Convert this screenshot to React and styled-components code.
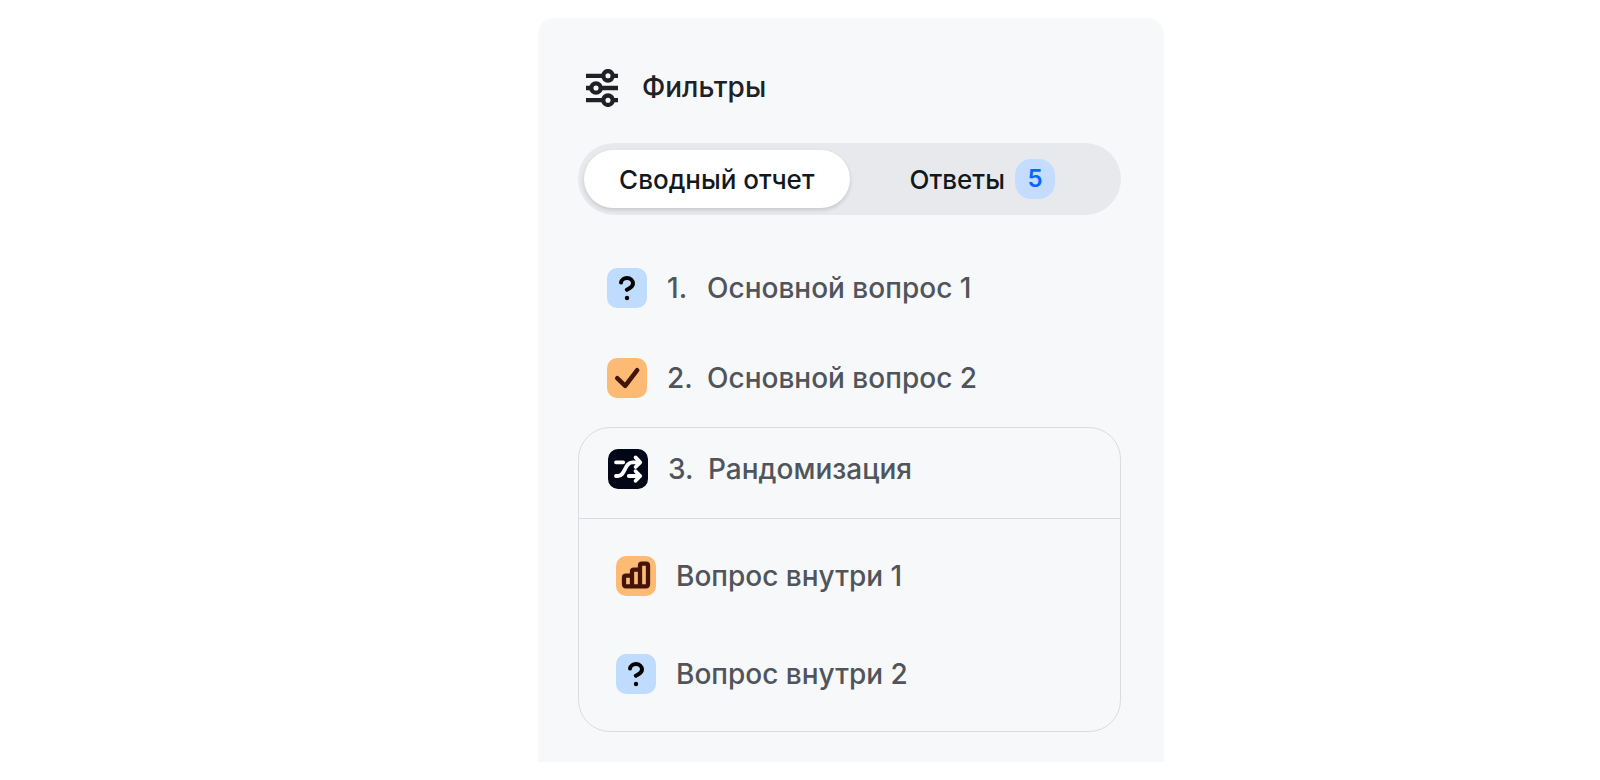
import React, { useState } from "react";
import styled, { createGlobalStyle } from "styled-components";

const questions = [
  { id: 1, type: "question", title: "Основной вопрос 1" },
  { id: 2, type: "check", title: "Основной вопрос 2" },
];

const group = {
  id: 3,
  type: "shuffle",
  title: "Рандомизация",
  children: [
    { id: 31, type: "bars", title: "Вопрос внутри 1" },
    { id: 32, type: "question", title: "Вопрос внутри 2" },
  ],
};

const iconColors = {
  question: { background: "#bfdbfe", color: "#000000" },
  check: { background: "#fdba74", color: "#431407" },
  bars: { background: "#fdba74", color: "#431407" },
  shuffle: { background: "#020617", color: "#ffffff" },
};

const iconShapes = {
  question: (
    <>
      <path
        d="M14 14.6C14.4 11.8 16.9 10 20 10C23.4 10 26 12.4 26 15.6C26 19.6 21.4 20.4 19.8 21.8"
        strokeWidth="4"
      />
      <circle cx="20" cy="30" r="2.2" fill="currentColor" stroke="none" />
    </>
  ),
  check: <path d="M10.2 20.2L18.2 27.8L30.2 12.2" strokeWidth="4.5" />,
  bars: (
    <path
      d="M16 30.3V19.7H10Q8 19.7 8 21.7V28.3Q8 30.3 10 30.3H30Q32 30.3 32 28.3V9.7Q32 7.7 30 7.7H26Q24 7.7 24 9.7V30.3M16 19.7V15.7Q16 13.7 18 13.7H24"
      strokeWidth="4.3"
    />
  ),
  shuffle: (
    <path
      d="M8 13.3H15.2M8 27H10C17.4 27 16.4 13.3 24.4 13.3H31.6M27.6 8.4L32.2 13.3L27.6 18M20.8 27H31.6M27.6 22.2L32.2 27L27.6 31.8"
      strokeWidth="3.8"
    />
  ),
};

const TypeIcon = ({ type }) => (
  <IconBox $colors={iconColors[type]}>
    <svg viewBox="0 0 40 40" aria-hidden="true">
      {iconShapes[type]}
    </svg>
  </IconBox>
);

const FilterIcon = () => (
  <svg width="32" height="38" viewBox="0 0 32 38" fill="none" aria-hidden="true">
    <g stroke="currentColor" strokeWidth="4.3">
      <path d="M0 6.8H17M27 6.8H32M0 19H5M15 19H32M0 31.2H17M27 31.2H32" />
      <circle cx="22" cy="6.8" r="4.7" />
      <circle cx="10" cy="19" r="4.7" />
      <circle cx="22" cy="31.2" r="4.7" />
    </g>
  </svg>
);

const App = () => {
  const [activeTab, setActiveTab] = useState("report");

  return (
    <Page>
      <GlobalStyle />
      <Panel>
        <Header>
          <FilterIcon />
          <Title>Фильтры</Title>
        </Header>

        <Tabs role="tablist">
          <Tab
            role="tab"
            aria-selected={activeTab === "report"}
            $active={activeTab === "report"}
            onClick={() => setActiveTab("report")}
          >
            Сводный отчет
          </Tab>
          <Tab
            role="tab"
            aria-selected={activeTab === "answers"}
            $active={activeTab === "answers"}
            onClick={() => setActiveTab("answers")}
          >
            Ответы
            <Badge>5</Badge>
          </Tab>
        </Tabs>

        <List>
          {questions.map(({ id, type, title }) => (
            <li key={id}>
              <Row>
                <TypeIcon type={type} />
                <Label>
                  <Number>{id}.</Number>
                  {title}
                </Label>
              </Row>
            </li>
          ))}
          <Group>
            <GroupHeader>
              <TypeIcon type={group.type} />
              <Label>
                <Number>{group.id}.</Number>
                {group.title}
              </Label>
            </GroupHeader>
            <NestedList>
              {group.children.map(({ id, type, title }) => (
                <li key={id}>
                  <NestedRow>
                    <TypeIcon type={type} />
                    <Label>{title}</Label>
                  </NestedRow>
                </li>
              ))}
            </NestedList>
          </Group>
        </List>
      </Panel>
    </Page>
  );
};

const GlobalStyle = createGlobalStyle`
  * {
    box-sizing: border-box;
  }

  body {
    margin: 0;
    background: #fff;
    font-family: Inter, "Liberation Sans", sans-serif;
  }

  button {
    border: none;
    background: none;
    font: inherit;
    cursor: pointer;
  }
`;

const Page = styled.main`
  display: grid;
  grid-template-columns: 538fr minmax(0, 626px) 436fr;
  padding: 18px 0;
`;

const Panel = styled.aside`
  grid-column: 2;
  padding: 51px 43px 30px 40px;
  border-radius: 16px 16px 0 0;
  background: #f7f8fa;
`;

const Header = styled.header`
  display: flex;
  gap: 24px;
  margin-bottom: 36px;
  padding-left: 8px;
  color: #202124;
`;

const Title = styled.h2`
  margin: 0;
  font-size: 28px;
  font-weight: 500;
  line-height: 36px;
`;

const Tabs = styled.div`
  display: flex;
  padding: 7px 6px;
  border-radius: 36px;
  background: #e8e9ed;
`;

const Tab = styled.button`
  display: flex;
  flex: 1;
  align-items: center;
  justify-content: center;
  gap: 10px;
  height: 58px;
  padding: 0;
  border-radius: 29px;
  background: ${({ $active }) => ($active ? "#fff" : "transparent")};
  box-shadow: ${({ $active }) =>
    $active ? "0 2px 4px rgba(0, 0, 0, 0.15)" : "none"};
  color: #12191d;
  font-size: 26px;
  font-weight: 500;
`;

const Badge = styled.span`
  width: 40px;
  border-radius: 16px;
  background: #c4dcff;
  color: #0a66ff;
  font-size: 24px;
  font-weight: 600;
  line-height: 40px;
`;

const List = styled.ul`
  margin: 28px 0 0;
  padding: 0;
  list-style: none;
`;

const Row = styled.button`
  display: flex;
  align-items: center;
  gap: 20px;
  width: 100%;
  padding: 25px 29px;
  text-align: left;
`;

const Group = styled.li`
  margin-top: 4px;
  border: 1px solid #d9dce1;
  border-radius: 32px;
`;

const GroupHeader = styled(Row)`
  padding: 21px 29px 29px;
`;

const NestedList = styled.ul`
  margin: 0;
  padding: 8px 0;
  border-top: 1px solid #d9dce1;
  list-style: none;
`;

const NestedRow = styled(Row)`
  padding: 29px 37px;
`;

const IconBox = styled.span`
  flex: none;
  width: 40px;
  height: 40px;
  border-radius: 10px;
  background: ${({ $colors }) => $colors.background};
  color: ${({ $colors }) => $colors.color};

  svg {
    display: block;
    fill: none;
    stroke: currentColor;
    stroke-linecap: round;
    stroke-linejoin: round;
  }
`;

const Label = styled.span`
  display: flex;
  color: #50555b;
  font-size: 28px;
  font-weight: 500;
  line-height: 40px;
`;

const Number = styled.span`
  width: 40px;
`;

export default App;
